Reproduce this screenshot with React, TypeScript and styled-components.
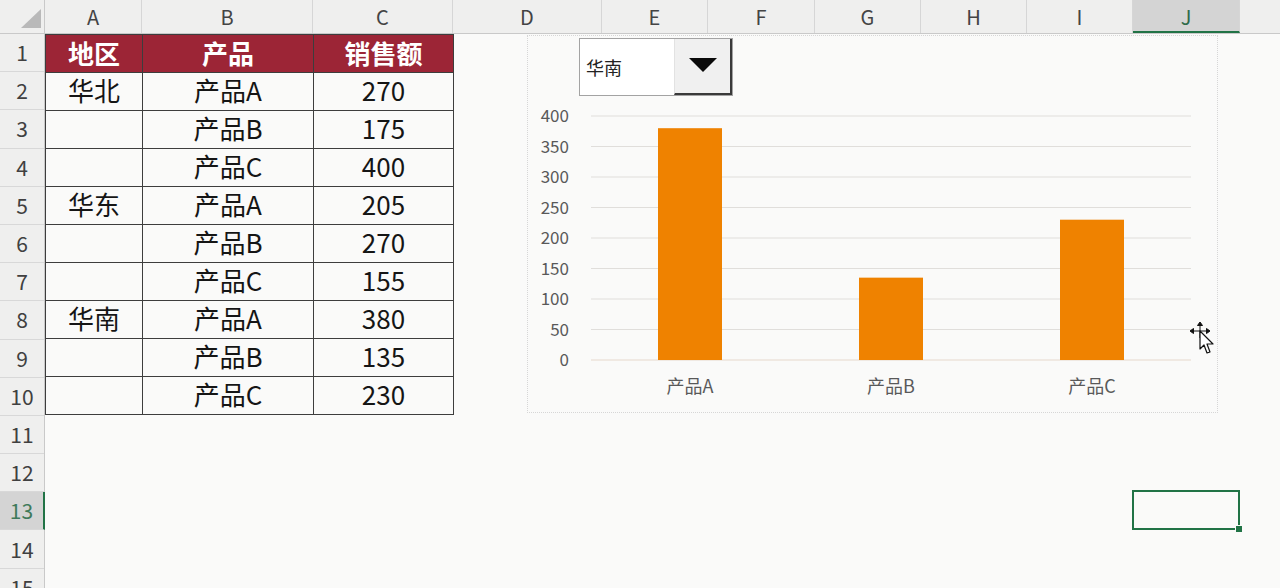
import styled, { createGlobalStyle } from "styled-components";

const GlobalStyle = createGlobalStyle`
    html, body {
        margin: 0;
        padding: 0;
        background: #fafaf9;
        overflow: hidden;
    }
    body {
        font-family: "Noto Sans CJK SC", "Noto Sans", sans-serif;
    }
`;

const columns = [
    { label: "A", w: 97 },
    { label: "B", w: 171 },
    { label: "C", w: 140 },
    { label: "D", w: 149 },
    { label: "E", w: 106 },
    { label: "F", w: 107 },
    { label: "G", w: 106 },
    { label: "H", w: 106 },
    { label: "I", w: 106 },
    { label: "J", w: 107 },
    { label: "", w: 60 },
];

const rows = [
    ["华北", "产品A", "270"],
    ["", "产品B", "175"],
    ["", "产品C", "400"],
    ["华东", "产品A", "205"],
    ["", "产品B", "270"],
    ["", "产品C", "155"],
    ["华南", "产品A", "380"],
    ["", "产品B", "135"],
    ["", "产品C", "230"],
];

const chartData = [
    { name: "产品A", value: 380 },
    { name: "产品B", value: 135 },
    { name: "产品C", value: 230 },
];

const SELECTED_COL = "J";
const SELECTED_ROW = 13;

function Corner() {
    return (
        <CornerBox>
            <svg width="45" height="34">
                <polygon points="21,28 41,28 41,9" fill="#b9b9b9" />
            </svg>
        </CornerBox>
    );
}

function ColumnHeaders() {
    return (
        <HeaderBar>
            <Corner />
            {columns.map((c, i) => (
                <ColHeader key={i} $w={c.w} $active={c.label === SELECTED_COL}>
                    {c.label}
                </ColHeader>
            ))}
        </HeaderBar>
    );
}

function RowHeaders() {
    const nums = Array.from({ length: 15 }, (_, i) => i + 1);
    return (
        <RowHeaderColumn>
            {nums.map((n) => (
                <RowHeader key={n} $active={n === SELECTED_ROW}>
                    {n}
                </RowHeader>
            ))}
        </RowHeaderColumn>
    );
}

function DataTable() {
    return (
        <TableGrid>
            <HeadCell>地区</HeadCell>
            <HeadCell>产品</HeadCell>
            <HeadCell>销售额</HeadCell>
            {rows.map((r, i) =>
                r.map((v, j) => <Cell key={i + "-" + j}>{v}</Cell>)
            )}
        </TableGrid>
    );
}

function Dropdown() {
    return (
        <DropdownBox>
            <DropdownText>华南</DropdownText>
            <DropdownButton>
                <svg width="30" height="16">
                    <polygon points="1,1 29,1 15,15" fill="#0a0a0a" />
                </svg>
            </DropdownButton>
        </DropdownBox>
    );
}

function BarChart() {
    const zeroY = 264;
    const scale = 244 / 400;
    const ticks = [0, 50, 100, 150, 200, 250, 300, 350, 400];
    const centers = [162, 363, 564];
    return (
        <svg width="688" height="316">
            {ticks.map((t) => {
                const y = zeroY - t * scale;
                return (
                    <g key={t}>
                        <line
                            x1="63"
                            x2="663"
                            y1={y}
                            y2={y}
                            stroke={t === 0 ? "#e6d8cc" : "#e0dedb"}
                            strokeWidth="1"
                        />
                        <text
                            x="41"
                            y={y + 6}
                            textAnchor="end"
                            fontSize="17"
                            fill="#595959"
                            fontFamily="'Noto Sans CJK SC', 'Noto Sans', sans-serif"
                        >
                            {t}
                        </text>
                    </g>
                );
            })}
            {chartData.map((d, i) => {
                const h = d.value * scale;
                return (
                    <g key={d.name}>
                        <rect
                            x={centers[i] - 32}
                            y={zeroY - h}
                            width="64"
                            height={h}
                            fill="#ef8200"
                        />
                        <text
                            x={centers[i]}
                            y="297"
                            textAnchor="middle"
                            fontSize="18"
                            fill="#595959"
                            fontFamily="'Noto Sans CJK SC', 'Noto Sans', sans-serif"
                        >
                            {d.name}
                        </text>
                    </g>
                );
            })}
        </svg>
    );
}

function MoveCursor() {
    return (
        <CursorWrap>
            <svg width="26" height="34" viewBox="0 0 26 34">
                {/* four-way move arrows */}
                <g fill="#111" stroke="#111" strokeWidth="1">
                    <line x1="10" y1="2" x2="10" y2="16" />
                    <line x1="2" y1="9" x2="18" y2="9" />
                    <polygon points="10,0 7.5,3.5 12.5,3.5" />
                    <polygon points="0,9 3.5,6.5 3.5,11.5" />
                    <polygon points="20,9 16.5,6.5 16.5,11.5" />
                </g>
                {/* pointer arrow */}
                <polygon
                    points="10,9 10,27 14,23 17,31 20,30 17,22 23,22"
                    fill="#ffffff"
                    stroke="#111"
                    strokeWidth="1.2"
                    strokeLinejoin="round"
                />
            </svg>
        </CursorWrap>
    );
}

export default function App() {
    return (
        <>
            <GlobalStyle />
            <Sheet>
                <ColumnHeaders />
                <Body>
                    <RowHeaders />
                    <Canvas>
                        <DataTable />
                        <ChartObject>
                            <Dropdown />
                            <BarChart />
                        </ChartObject>
                        <MoveCursor />
                        <SelectedCell>
                            <FillHandle />
                        </SelectedCell>
                    </Canvas>
                </Body>
            </Sheet>
        </>
    );
}

const Sheet = styled.div`
    width: 1280px;
    height: 588px;
    overflow: hidden;
    display: flex;
    flex-direction: column;
    background: #fafaf9;
`;

const HeaderBar = styled.div`
    display: flex;
    height: 34px;
    flex-shrink: 0;
    background: #efefee;
    border-bottom: 1px solid #c9c9c9;
    box-sizing: border-box;
`;

const CornerBox = styled.div`
    width: 45px;
    flex-shrink: 0;
    border-right: 1px solid #c9c9c9;
    box-sizing: border-box;
    display: flex;

    svg {
        display: block;
    }
`;

const ColHeader = styled.div<{ $w: number; $active?: boolean }>`
    width: ${(p) => p.$w}px;
    flex-shrink: 0;
    box-sizing: border-box;
    border-right: 1px solid #d6d6d6;
    border-bottom: ${(p) => (p.$active ? "2px solid #217346" : "none")};
    background: ${(p) => (p.$active ? "#d4d4d4" : "transparent")};
    color: ${(p) => (p.$active ? "#2f6b4a" : "#444444")};
    display: flex;
    align-items: center;
    justify-content: center;
    font-size: 20px;
    padding-top: ${(p) => (p.$active ? "2px" : "0")};
    line-height: 1;
`;

const Body = styled.div`
    display: flex;
    flex: 1;
    min-height: 0;
`;

const RowHeaderColumn = styled.div`
    width: 45px;
    flex-shrink: 0;
    display: flex;
    flex-direction: column;
    background: #efefee;
    border-right: 1px solid #c9c9c9;
    box-sizing: border-box;
`;

const RowHeader = styled.div<{ $active?: boolean }>`
    height: 38.2px;
    flex-shrink: 0;
    box-sizing: border-box;
    border-bottom: 1px solid #d8d8d8;
    margin-right: ${(p) => (p.$active ? "-1px" : "0")};
    border-right: ${(p) => (p.$active ? "2px solid #217346" : "none")};
    background: ${(p) => (p.$active ? "#d4d4d4" : "transparent")};
    color: ${(p) => (p.$active ? "#3f7a5a" : "#404040")};
    display: flex;
    align-items: center;
    justify-content: center;
    font-size: 21px;
    line-height: 1;
`;

const Canvas = styled.div`
    position: relative;
    flex: 1;
`;

const TableGrid = styled.div`
    display: grid;
    grid-template-columns: 96px 170px 139px;
    grid-auto-rows: 37px;
    gap: 1px;
    padding: 1px;
    background: #3d3d3d;
    width: fit-content;
`;

const Cell = styled.div`
    background: #fafaf9;
    color: #151515;
    font-size: 26px;
    display: flex;
    align-items: center;
    justify-content: center;
    line-height: 1;
    padding-bottom: 3px;
`;

const HeadCell = styled(Cell)`
    background: #9c2536;
    color: #ffffff;
    font-weight: 700;
    padding-bottom: 2px;
`;

const ChartObject = styled.div`
    position: absolute;
    left: 482px;
    top: 1px;
    width: 691px;
    height: 378px;
    box-sizing: border-box;
    border: 1px dotted #d6d6d6;
    background: #fafaf9;
    display: flex;
    flex-direction: column;

    svg {
        display: block;
    }
`;

const DropdownBox = styled.div`
    margin: 2px 0 0 51px;
    width: 154px;
    height: 58px;
    box-sizing: border-box;
    border: 1px solid #a3a3a3;
    background: #ffffff;
    display: flex;
`;

const DropdownText = styled.div`
    flex: 1;
    display: flex;
    align-items: center;
    padding-left: 6px;
    font-size: 18px;
    color: #222;
`;

const DropdownButton = styled.div`
    width: 58px;
    box-sizing: border-box;
    background: #f0f0f0;
    border-left: 1px solid #e2e2e2;
    border-right: 2px solid #3a3a3a;
    border-bottom: 2px solid #3a3a3a;
    display: flex;
    align-items: center;
    justify-content: center;
    padding-bottom: 2px;
`;

const CursorWrap = styled.div`
    position: absolute;
    left: 1145px;
    top: 288px;
    pointer-events: none;

    svg {
        display: block;
    }
`;

const SelectedCell = styled.div`
    position: absolute;
    left: 1087px;
    top: 456px;
    width: 108px;
    height: 40px;
    box-sizing: border-box;
    border: 2px solid #217346;
`;

const FillHandle = styled.div`
    position: absolute;
    right: -5px;
    bottom: -5px;
    width: 6px;
    height: 6px;
    background: #217346;
    border: 1px solid #fafaf9;
`;
